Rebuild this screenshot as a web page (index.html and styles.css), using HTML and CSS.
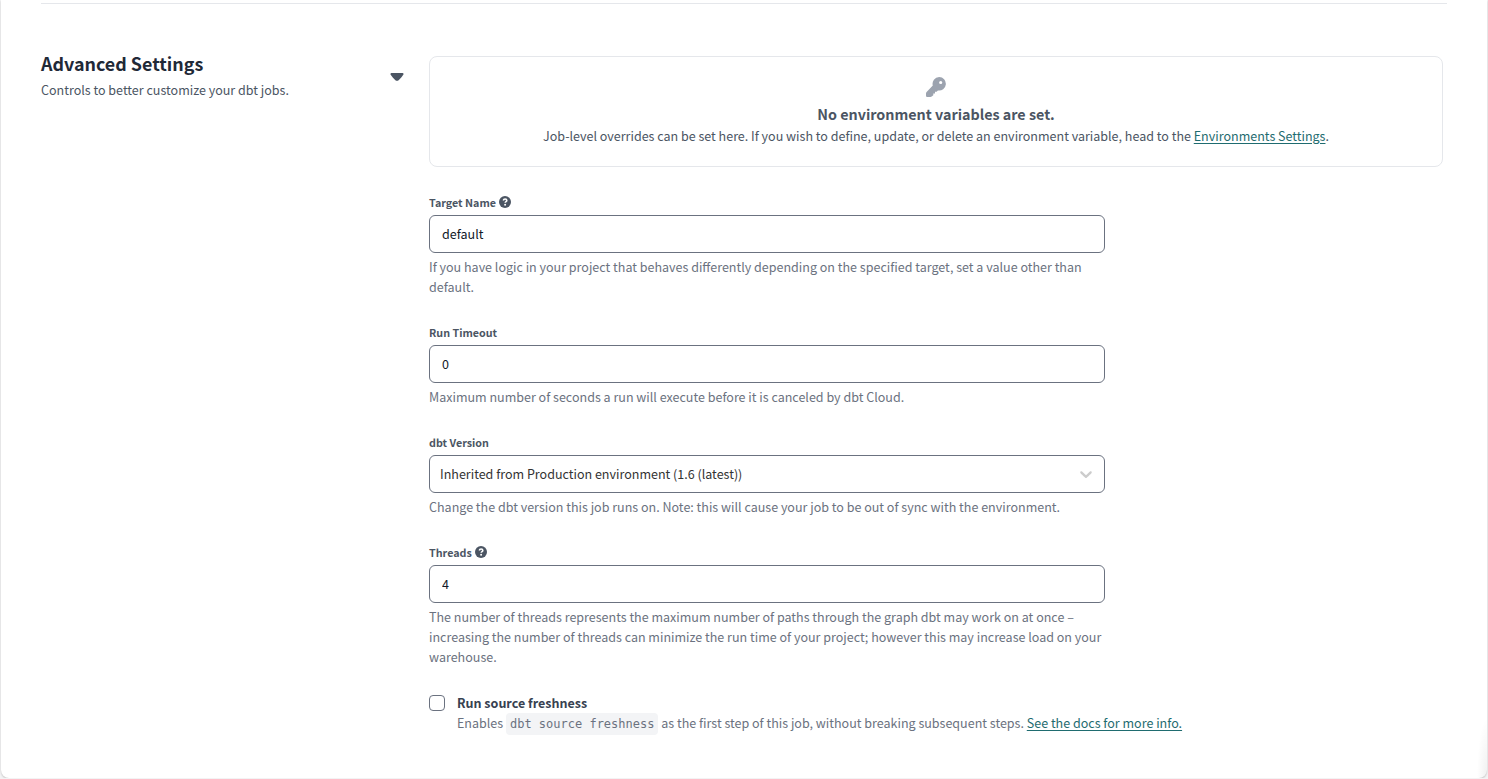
FILE: index.html
```html
<!DOCTYPE html>
<html lang="en">
<head>
<meta charset="utf-8">
<title>Job settings</title>
<link rel="stylesheet" href="styles.css">
</head>
<body>
<main class="card">
  <section class="settings">
    <header class="intro">
      <div>
        <h2 class="intro-title">Advanced Settings</h2>
        <p class="intro-text">Controls to better customize your dbt jobs.</p>
      </div>
      <button class="toggle" type="button" aria-label="Collapse advanced settings" aria-expanded="true">
        <svg width="14" height="8" viewBox="0 0 14 8" aria-hidden="true"><path d="M1.400 0h11.200c.8 0 1.100.9.8 1.500C12.600 3 10.500 5.500 8.600 7.200c-.9.8-2.300.8-3.200 0C3.500 5.500 1.400 3 .6 1.500.3.900.6 0 1.400 0z"/></svg>
      </button>
    </header>
    <form class="content">
      <div class="notice">
        <svg class="key" width="20" height="20" viewBox="0 0 20 20" aria-hidden="true"><path fill-rule="evenodd" d="M13.200 0a6.800 6.800 0 1 1-1.300 13.500L10.600 14.800H9v1.700H7.300v1.700L6 19.300c-.5.4-1 .7-1.700.7H1.600C.6 20 0 19.400 0 18.400v-2c0-.6.200-1.100.6-1.500l6.200-6.300A6.800 6.800 0 0 1 13.200 0zM14.700 3.900a1.600 1.600 0 1 0 0 3.200 1.600 1.600 0 0 0 0-3.200z"/></svg>
        <h3 class="notice-title">No environment variables are set.</h3>
        <p class="notice-text">Job-level overrides can be set here. If you wish to define, update, or delete an environment variable, head to the <a href="#environments">Environments Settings</a>.</p>
      </div>

      <div class="field">
        <div class="label-row">
          <label for="target">Target Name</label>
          <svg class="help-icon" width="12" height="12" viewBox="0 0 12 12" aria-hidden="true"><circle cx="6" cy="6" r="6"/><path d="M4.300 4.500C4.500 3.500 5.200 3 6.100 3c1 0 1.700.6 1.700 1.400 0 1.200-1.600 1.200-1.600 2.400"/><circle class="dot" cx="6.100" cy="8.800" r="1"/></svg>
        </div>
        <input class="control text-input" id="target" type="text" value="default">
        <p class="hint">If you have logic in your project that behaves differently depending on the specified target, set a value other than default.</p>
      </div>

      <div class="field">
        <div class="label-row"><label for="timeout">Run Timeout</label></div>
        <input class="control text-input" id="timeout" type="text" value="0">
        <p class="hint">Maximum number of seconds a run will execute before it is canceled by dbt Cloud.</p>
      </div>

      <div class="field">
        <div class="label-row"><label for="version">dbt Version</label></div>
        <div class="select-wrap">
          <select class="control select" id="version"><option>Inherited from Production environment (1.6 (latest))</option></select>
          <svg class="chevron" width="20" height="20" viewBox="0 0 20 20" aria-hidden="true"><path d="M4.516 7.548c.436-.446 1.043-.481 1.576 0L10 11.295l3.908-3.747c.533-.481 1.141-.446 1.574 0 .436.445.408 1.197 0 1.615-.406.418-4.695 4.502-4.695 4.502a1.095 1.095 0 0 1-1.576 0S4.924 9.581 4.516 9.163s-.436-1.170 0-1.615z"/></svg>
        </div>
        <p class="hint">Change the dbt version this job runs on. Note: this will cause your job to be out of sync with the environment.</p>
      </div>

      <div class="field">
        <div class="label-row">
          <label for="threads">Threads</label>
          <svg class="help-icon" width="12" height="12" viewBox="0 0 12 12" aria-hidden="true"><circle cx="6" cy="6" r="6"/><path d="M4.300 4.500C4.500 3.500 5.200 3 6.100 3c1 0 1.700.6 1.700 1.400 0 1.200-1.600 1.200-1.600 2.400"/><circle class="dot" cx="6.100" cy="8.800" r="1"/></svg>
        </div>
        <input class="control text-input" id="threads" type="text" value="4">
        <p class="hint">The number of threads represents the maximum number of paths through the graph dbt may work on at once – increasing the number of threads can minimize the run time of your project; however this may increase load on your warehouse.</p>
      </div>

      <div class="check-row">
        <input class="checkbox" id="freshness" type="checkbox">
        <div>
          <label class="check-label" for="freshness">Run source freshness</label>
          <p class="check-text">Enables <code>dbt source freshness</code> as the first step of this job, without breaking subsequent steps. <a href="#docs">See the docs for more info.</a></p>
        </div>
      </div>
    </form>
  </section>
</main>
</body>
</html>
```
FILE: styles.css
```css
* { box-sizing: border-box; }

body {
  margin: 0;
  background: #f3f3f4;
  color: #4b5563;
  font-family: "Noto Sans CJK SC", "Noto Sans", sans-serif;
  font-size: 14px;
  font-size-adjust: 0.486;
  line-height: 20px;
}

h2, h3, p { margin: 0; }

a { color: #1f6c70; text-decoration: underline; text-underline-offset: 2px; }

.card {
  margin: 0 1px;
  padding: 3px 40px 44px;
  background: radial-gradient(ellipse 10px 60px at right bottom, rgba(0, 0, 0, 0.06), transparent) #fff;
  border-radius: 0 0 8px 8px;
  box-shadow: 0 1px 2px rgba(0, 0, 0, 0.2);
}

.settings {
  display: flex;
  padding: 48px 4px 0 0;
  border-top: 1px solid #e5e7eb;
}

.intro {
  display: flex;
  flex: 0 0 388px;
  align-items: flex-start;
  justify-content: space-between;
  padding-right: 25px;
}

.intro-title {
  margin-bottom: 6px;
  color: #1f2937;
  font-size: 20px;
  font-weight: 600;
  line-height: 22px;
}

.toggle {
  display: flex;
  margin-top: 21px;
  padding: 0;
  border: 0;
  background: none;
}

.toggle svg { fill: #4b5563; }

.content {
  display: flex;
  flex: 1;
  flex-direction: column;
  gap: 26px;
  min-width: 0;
  padding-top: 4px;
}

.notice {
  display: flex;
  flex-direction: column;
  align-items: center;
  gap: 2px;
  padding: 20px 16px;
  border: 1px solid #e5e7eb;
  border-radius: 8px;
  text-align: center;
}

.key { margin-bottom: 5px; fill: #9ca3af; }

.notice-title { font-size: 16px; font-weight: 600; line-height: 20px; }

.field {
  display: flex;
  flex-direction: column;
  width: 66.667%;
}

.label-row {
  display: flex;
  align-items: center;
  gap: 3px;
  margin-bottom: 2px;
  font-size: 12px;
  font-weight: 600;
}

.help-icon { margin-bottom: 2px; fill: #4b5563; }
.help-icon path { fill: none; stroke: #fff; stroke-width: 1.6; }
.help-icon .dot { fill: #fff; }

.control {
  width: 100%;
  height: 38px;
  border: 1px solid #6b7280;
  border-radius: 6px;
  background: #fff;
  color: #111827;
  font: inherit;
  font-size-adjust: 0.486;
}

.text-input { padding: 0 12px 2px; }

.select-wrap { display: grid; align-items: center; }
.select-wrap > * { grid-area: 1 / 1; }
.select { padding: 0 10px; appearance: none; color: #333; }

.chevron {
  justify-self: end;
  margin-right: 9px;
  fill: #ccc;
  pointer-events: none;
}

.hint { margin-top: 4px; color: #6b7280; }

.check-row { display: flex; align-items: flex-start; gap: 12px; }

.checkbox {
  flex: none;
  width: 16px;
  height: 16px;
  margin: 2px 0 0;
  border: 1px solid #6b7280;
  border-radius: 4px;
  background: #fff;
  appearance: none;
}

.check-label { display: block; color: #374151; font-weight: 600; }
.check-text { color: #6b7280; }

code {
  padding: 4px;
  border-radius: 4px;
  background: #f3f4f6;
  font-family: "DejaVu Sans Mono", monospace;
  font-size: 12px;
  font-size-adjust: none;
}
```
